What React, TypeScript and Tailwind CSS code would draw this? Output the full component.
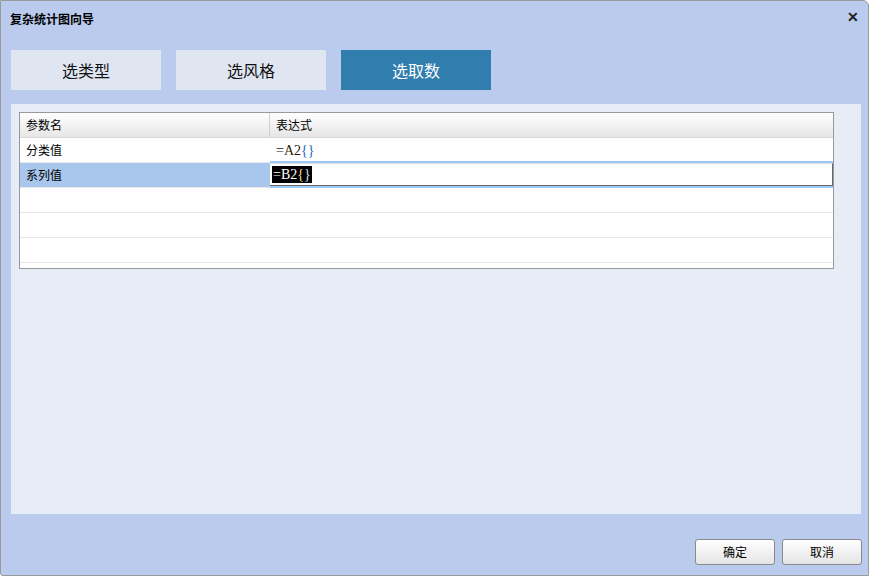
import React from "react";

const cjk = "font-['SimSun','Noto_Sans_CJK_SC',sans-serif]";

const tabs = [
  { label: "选类型", active: false },
  { label: "选风格", active: false },
  { label: "选取数", active: true },
];

const rows = [
  { name: "分类值", expr: "A2", selected: false },
  { name: "系列值", expr: "B2", selected: true },
  { name: "", expr: "", selected: false },
  { name: "", expr: "", selected: false },
  { name: "", expr: "", selected: false },
];

function Formula({ cell, selected }: { cell: string; selected: boolean }) {
  if (selected) {
    return (
      <span className="bg-black px-[1px] font-['Liberation_Serif',serif] text-[14px] leading-[17px] text-white">
        ={cell}
        <span className="text-[#ffd9a0]">{"{"}</span>
        <span className="text-[#cfe4ff]">{"}"}</span>
      </span>
    );
  }
  return (
    <span className="font-['Liberation_Serif',serif] text-[14px] text-[#111]">
      =<span className="text-[#2a1c08]">{cell}</span>
      <span className="text-[#1f66bb]">{"{}"}</span>
    </span>
  );
}

export default function App() {
  return (
    <div className="h-[577px] w-[870px] overflow-hidden bg-white">
      <div className="flex h-[576px] w-[869px] flex-col rounded-tr-[6px] rounded-bl-[3px] border border-[#9a9a9a] bg-[#bacbee]">
        {/* 标题栏 */}
        <div className="flex h-[49px] items-start justify-between pl-[9px] pr-[9px] pt-[9px]">
          <span className={`${cjk} text-[12px] font-bold text-black`}>复杂统计图向导</span>
          <span className="text-[14px] font-bold leading-[14px] text-[#222] font-['Liberation_Sans',sans-serif]">✕</span>
        </div>

        {/* 步骤标签 */}
        <div className="flex gap-[15px] pl-[10px]">
          {tabs.map((t) => (
            <div
              key={t.label}
              className={`${cjk} flex h-[40px] w-[150px] items-center justify-center text-[16px] ${
                t.active ? "bg-[#2f7eae] text-white" : "bg-[#dfe6f1] text-[#111]"
              }`}
            >
              {t.label}
            </div>
          ))}
        </div>

        {/* 内容面板 */}
        <div className="ml-[10px] mt-[14px] h-[410px] w-[850px] bg-[#e6edf7] pl-[8px] pt-[8px]">
          <div className="h-[157px] w-[815px] overflow-hidden border border-[#999] bg-white">
            <div className="flex h-[25px] border-b border-[#d8d8d8] bg-gradient-to-b from-white to-[#e6e6e6]">
              <div className={`${cjk} flex w-[250px] items-center border-r border-[#d0d0d0] pl-[6px] text-[12px] text-black`}>
                参数名
              </div>
              <div className={`${cjk} flex flex-1 items-center pl-[6px] text-[12px] text-black`}>表达式</div>
            </div>
            {rows.map((r, i) => (
              <div key={i} className="flex h-[25px] border-b border-[#e8e8e8]">
                <div
                  className={`${cjk} flex w-[250px] items-center pl-[6px] text-[12px] text-black ${
                    r.selected ? "bg-[#a9c6ec]" : ""
                  }`}
                >
                  {r.name}
                </div>
                <div className="relative flex flex-1 items-center pl-[6px]">
                  {r.selected ? (
                    <div className="absolute left-0 top-[-2px] flex h-[27px] w-[563px] items-center border-y-[2px] border-[#9ccaf6]">
                      <div className="flex h-full w-full items-center border-b border-r border-[#666] border-t border-t-[#ddd] bg-white pl-[2px]">
                        <Formula cell={r.expr} selected />
                      </div>
                    </div>
                  ) : (
                    r.expr && <Formula cell={r.expr} selected={false} />
                  )}
                </div>
              </div>
            ))}
          </div>
        </div>

        {/* 按钮 */}
        <div className="mt-[25px] flex justify-end gap-[7px] pr-[6px]">
          {["确定", "取消"].map((b) => (
            <button
              key={b}
              className={`${cjk} h-[26px] w-[80px] rounded-[3px] border border-[#8a8a8a] bg-gradient-to-b from-white to-[#e4e4e4] text-[12px] text-black`}
            >
              {b}
            </button>
          ))}
        </div>
      </div>
    </div>
  );
}
